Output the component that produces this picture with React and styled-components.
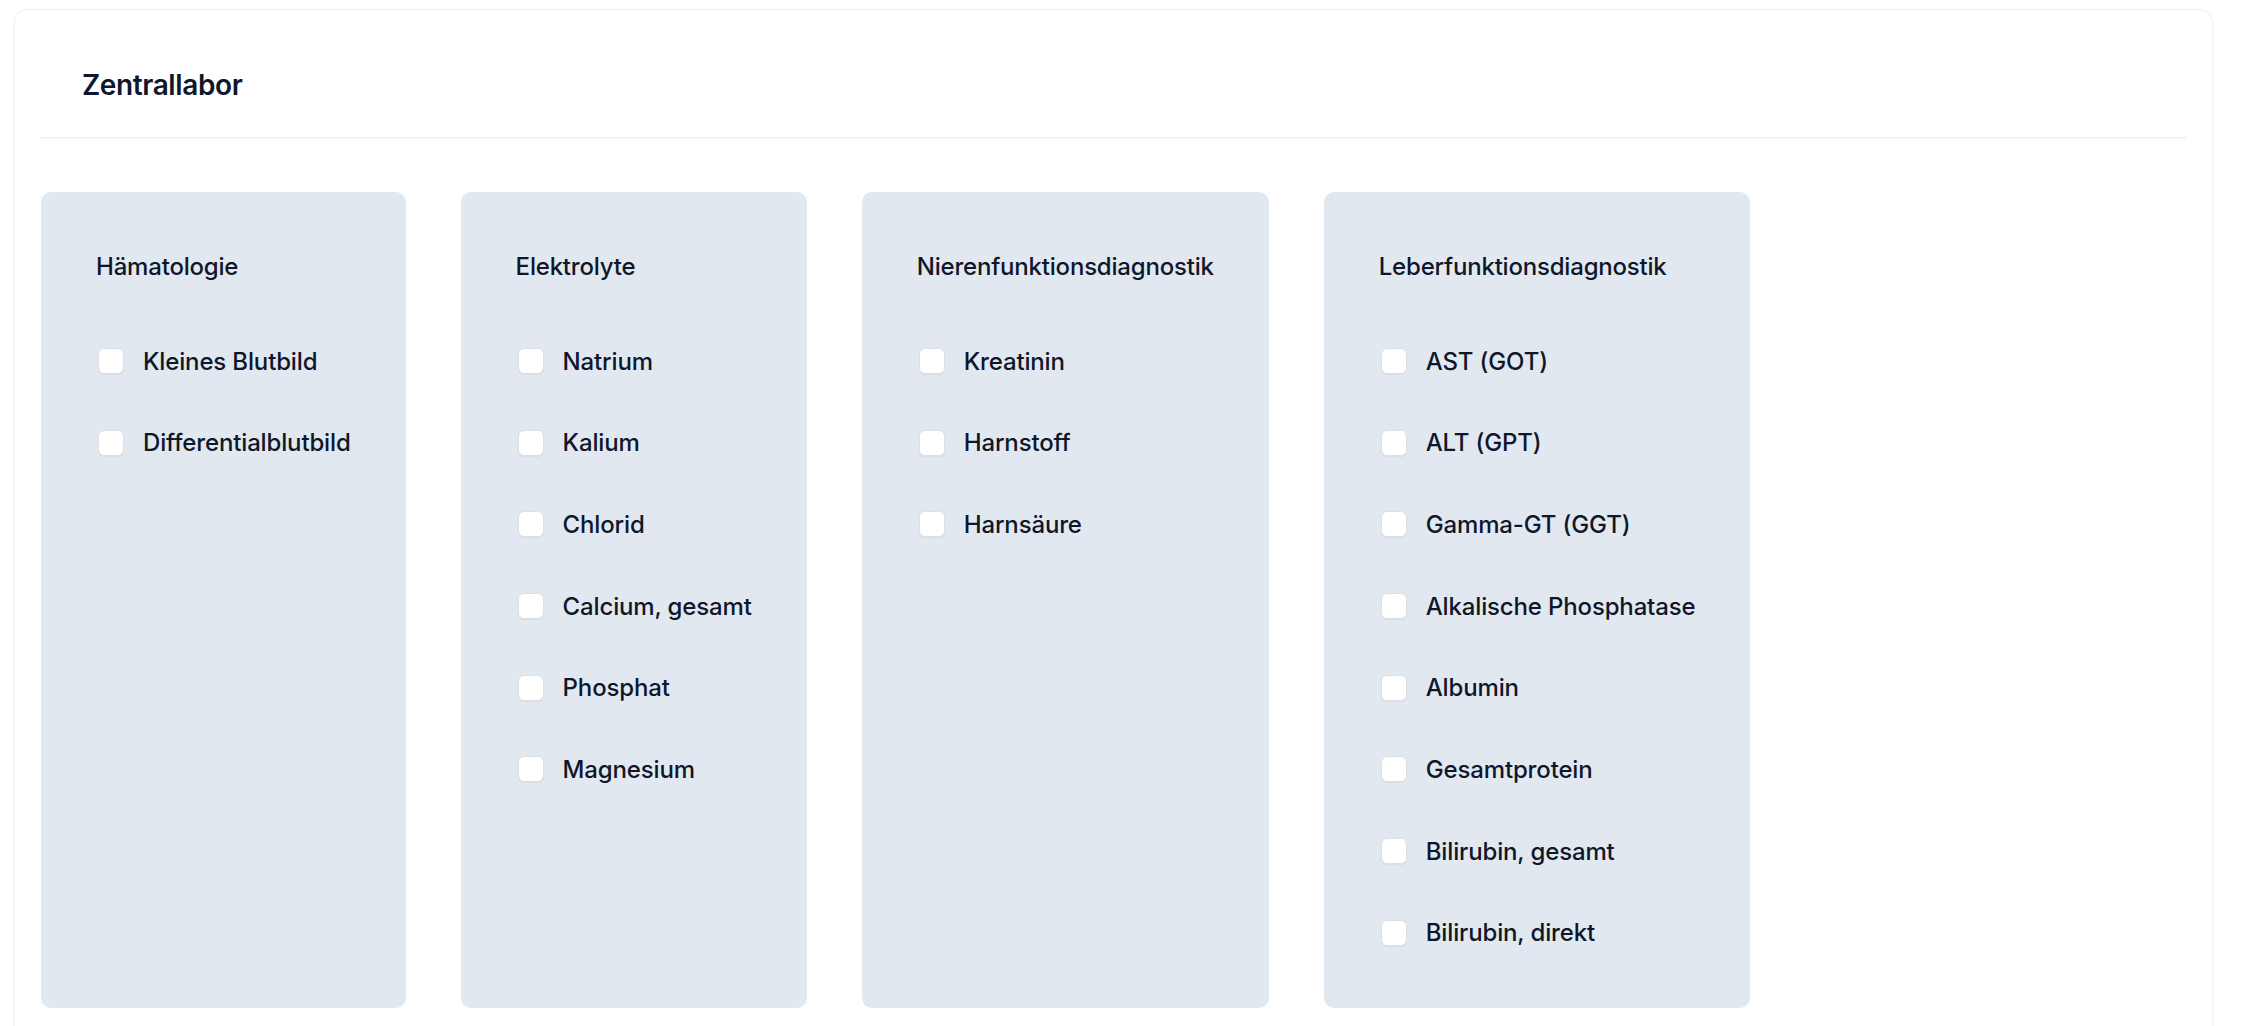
import React from 'react';
import styled, { createGlobalStyle } from 'styled-components';

const GlobalStyle = createGlobalStyle`
  body {
    margin: 0;
    background: #ffffff;
    font-family: Inter, "Noto Sans", sans-serif;
    color: #0f172a;
  }
`

const Page = styled.div`
  padding: 9px 41px 0 14px;
`

const Panel = styled.section`
  background: #fff;
  border: 1px solid #f1f1f3;
  border-radius: 14px;
  box-shadow: 0 0 3px rgba(0, 0, 0, 0.04);
  padding: 26px 26px 40px;
  min-height: 1100px;
`

const Header = styled.div`
  padding: 32px 41px 35px;
  border-bottom: 2px solid #f1f2f4;
`

const Title = styled.h1`
  margin: 0;
  font-size: 28px;
  line-height: 34px;
  font-weight: 600;
  letter-spacing: -0.4px;
  color: #0f172a;
`

const Groups = styled.div`
  display: flex;
  align-items: stretch;
  gap: 55px;
  margin-top: 53px;
`

const Group = styled.div`
  flex: none;
  background: #e2e8f0;
  border-radius: 10px;
  padding: 55px;
`

const GroupTitle = styled.h2`
  margin: 0 0 54px;
  font-size: 24px;
  line-height: 40px;
  font-weight: 500;
  letter-spacing: -0.2px;
  color: #0f172a;
  white-space: nowrap;
`

const List = styled.div`
  display: flex;
  flex-direction: column;
  gap: 41.7px;
`

const Item = styled.label`
  display: flex;
  align-items: center;
  height: 40px;
  gap: 19px;
  font-size: 24px;
  font-weight: 500;
  letter-spacing: -0.15px;
  color: #0f172a;
  white-space: nowrap;
  cursor: pointer;
`

const Box = styled.span`
  width: 26px;
  height: 26px;
  margin-left: 2px;
  box-sizing: border-box;
  background: #fff;
  border: 1px solid #dcdfe4;
  border-radius: 6px;
  box-shadow: 0 1px 1px rgba(0, 0, 0, 0.05);
  flex: none;
`

const groups = [
  { title: 'Hämatologie', items: ['Kleines Blutbild', 'Differentialblutbild'] },
  { title: 'Elektrolyte', items: ['Natrium', 'Kalium', 'Chlorid', 'Calcium, gesamt', 'Phosphat', 'Magnesium'] },
  { title: 'Nierenfunktionsdiagnostik', items: ['Kreatinin', 'Harnstoff', 'Harnsäure'] },
  {
    title: 'Leberfunktionsdiagnostik',
    items: ['AST (GOT)', 'ALT (GPT)', 'Gamma-GT (GGT)', 'Alkalische Phosphatase', 'Albumin', 'Gesamtprotein', 'Bilirubin, gesamt', 'Bilirubin, direkt'],
  },
];

function App() {
  return (
    <Page>
      <GlobalStyle />
      <Panel>
        <Header>
          <Title>Zentrallabor</Title>
        </Header>
        <Groups>
          {groups.map((g) => (
            <Group key={g.title}>
              <GroupTitle>{g.title}</GroupTitle>
              <List>
                {g.items.map((item) => (
                  <Item key={item}>
                    <Box />
                    {item}
                  </Item>
                ))}
              </List>
            </Group>
          ))}
        </Groups>
      </Panel>
    </Page>
  );
}

export default App;
